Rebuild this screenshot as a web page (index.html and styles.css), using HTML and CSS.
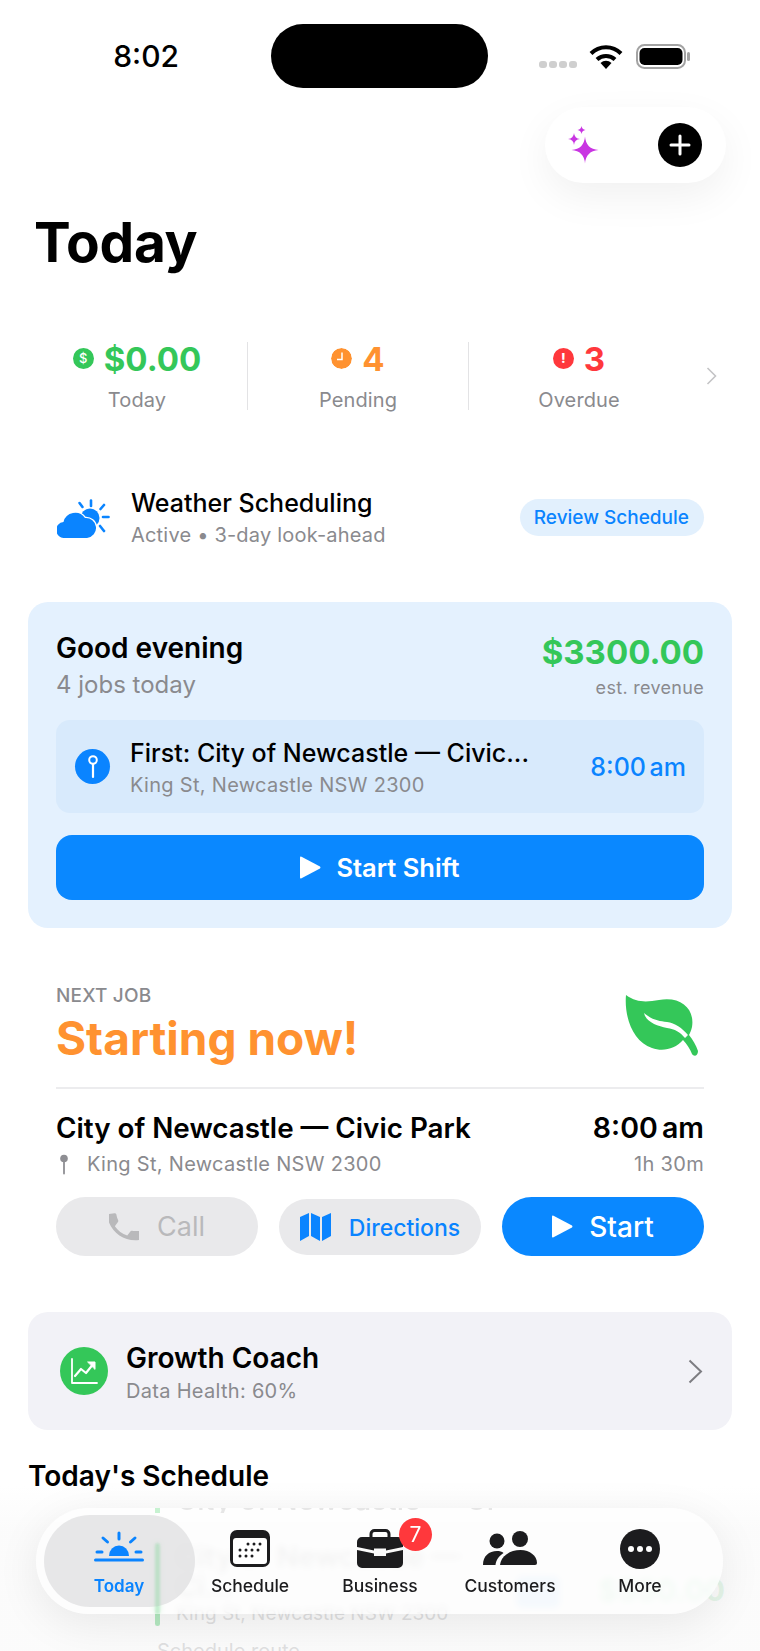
FILE: index.html
```html
<!DOCTYPE html>
<html lang="en">
<head>
    <meta charset="UTF-8">
    <meta name="viewport" content="width=device-width, initial-scale=1.0">
    <title>Today</title>
    <link rel="stylesheet" href="styles.css">
</head>
<body>
<div class="page">

    <!-- Status bar -->
    <div class="status">
        <span class="clock">8:02</span>
        <div class="island"></div>
        <div class="status-icons">
            <div class="signal"><i></i><i></i><i></i><i></i></div>
            <svg class="wifi" width="34" height="25" viewBox="0 0 34 25">
                <path d="M2 9.5A21 21 0 0 1 32 9.5" fill="none" stroke="#000" stroke-width="4"/>
                <path d="M8 15.5A13 13 0 0 1 26 15.5" fill="none" stroke="#000" stroke-width="4"/>
                <path d="M17 25L11.5 19A8 8 0 0 1 22.500 19Z" fill="#000"/>
            </svg>
            <svg width="55" height="25" viewBox="0 0 55 25">
                <rect x="1" y="1" width="48" height="23" rx="7.500" fill="none" stroke="#a3a3a3" stroke-width="2"/>
                <rect x="3.500" y="4" width="43" height="17" rx="5" fill="#000"/>
                <rect x="51" y="8" width="3" height="9" rx="1.500" fill="#a3a3a3"/>
            </svg>
        </div>
    </div>

    <!-- Assistant and add buttons -->
    <div class="toolbar">
        <svg width="32" height="38" viewBox="0 0 32 38">
            <path fill="#c935e2" d="M18 10.500Q19 23 31.500 24Q19 25 18 37.500Q17 25 4.500 24Q17 23 18 10.500Z"/>
            <path fill="#c935e2" d="M7 7Q7.500 12.500 13 13Q7.500 13.500 7 19Q6.500 13.500 1 13Q6.500 12.500 7 7Z"/>
            <path fill="#c935e2" d="M14.500 0Q15 3.500 18.500 4Q15 4.500 14.500 8Q14 4.500 10.500 4Q14 3.500 14.500 0Z"/>
        </svg>
        <div class="add-btn">
            <svg width="22" height="22" viewBox="0 0 22 22"><path d="M11 2V20M2 11H20" stroke="#fff" stroke-width="3" stroke-linecap="round"/></svg>
        </div>
    </div>

    <h1 class="title">Today</h1>

    <!-- Summary figures -->
    <div class="stats">
        <div class="stat">
            <div class="stat-value green"><span class="dot dot-green">$</span>$0.00</div>
            <div class="stat-label">Today</div>
        </div>
        <div class="stat stat-line">
            <div class="stat-value orange">
                <svg class="dot" viewBox="0 0 21 21"><circle cx="10.500" cy="10.500" r="10.500" fill="#ff9230"/><path d="M11 4.500V11.500H6" fill="none" stroke="#fff" stroke-width="1.500"/></svg>4
            </div>
            <div class="stat-label">Pending</div>
        </div>
        <div class="stat stat-line">
            <div class="stat-value red"><span class="dot dot-red">!</span>3</div>
            <div class="stat-label">Overdue</div>
        </div>
        <svg class="stat-more" width="11" height="18" viewBox="0 0 11 18"><path d="M1.500 1L9.500 9L1.500 17" fill="none" stroke="#c4c4c6" stroke-width="1.600"/></svg>
    </div>

    <!-- Weather -->
    <div class="weather">
        <svg width="54" height="39" viewBox="0 0 54 39">
            <g stroke="#0a84ff" stroke-width="2.600" stroke-linecap="round" fill="none">
                <path d="M34 1.500V7"/>
                <path d="M22.500 4L25.500 8"/>
                <path d="M47 6L43.500 10"/>
                <path d="M46 18H51.500"/>
                <path d="M43 27L47 32"/>
            </g>
            <circle cx="33" cy="19" r="9.500" fill="#0a84ff"/>
            <path d="M8 39A8 8 0 0 1 6.500 23A12 12 0 0 1 28 19A10 10 0 0 1 30 39Z" fill="#0a84ff" stroke="#fff" stroke-width="2.500" paint-order="stroke"/>
        </svg>
        <div class="weather-text">
            <div class="weather-name">Weather Scheduling</div>
            <div class="sub weather-sub">Active • 3-day look-ahead</div>
        </div>
        <div class="review">Review Schedule</div>
    </div>

    <!-- Shift card -->
    <div class="shift">
        <div class="shift-top">
            <div>
                <div class="greeting">Good evening</div>
                <div class="jobs-count">4 jobs today</div>
            </div>
            <div class="revenue">
                <div class="revenue-amount">$3300.00</div>
                <div class="revenue-label">est. revenue</div>
            </div>
        </div>
        <div class="first-job">
            <div class="pin-circle">
                <svg width="10" height="26" viewBox="0 0 10 26">
                    <circle cx="5" cy="6" r="3.800" fill="none" stroke="#fff" stroke-width="2"/>
                    <path d="M5 10V23" stroke="#fff" stroke-width="2.200" stroke-linecap="round"/>
                </svg>
            </div>
            <div class="first-job-text">
                <div class="first-job-name">First: City of Newcastle — Civic...</div>
                <div class="sub">King St, Newcastle NSW 2300</div>
            </div>
            <div class="first-job-time">8:00 am</div>
        </div>
        <div class="start-shift">
            <svg class="play" width="21" height="23" viewBox="0 0 21 23"><path d="M0 1.500Q0 0 1.500 .7L20 10.500Q21 11.500 20 12.500L1.500 22.300Q0 23 0 21.500Z" fill="#fff"/></svg>
            Start Shift
        </div>
    </div>

    <!-- Next job -->
    <div class="next">
        <div class="next-head">
            <div>
                <div class="next-label">NEXT JOB</div>
                <div class="next-status">Starting now!</div>
            </div>
            <svg width="73" height="62" viewBox="0 0 73 62">
                <path fill="#34c759" d="M1 0C12 8 22 7 34 5C56 1 70 14 67 32C66 36 65 38 64 40C68 45 71 50 73 56C73 61 69 62 67 59C65 54 62 49 58 45C50 54 38 57 27 53C8 47 -1 22 1 0Z"/>
                <path fill="#fff" d="M19 18C21 27 32 31 42 33C50 34 55 37 60 43L63 40C57 33 50 28 42 27C34 26 27 25 19 18Z"/>
            </svg>
        </div>
        <div class="next-row">
            <div class="next-name">City of Newcastle — Civic Park</div>
            <div class="next-time">8:00 am</div>
        </div>
        <div class="next-row next-row-sub">
            <div class="next-address">
                <svg width="10" height="21" viewBox="0 0 10 21">
                    <circle cx="5" cy="4.500" r="3.800" fill="#8e8e93"/>
                    <path d="M5 8V19.500" stroke="#8e8e93" stroke-width="1.800" stroke-linecap="round"/>
                </svg>
                <span class="sub">King St, Newcastle NSW 2300</span>
            </div>
            <div class="sub">1h 30m</div>
        </div>
        <div class="actions">
            <div class="action action-call">
                <svg width="30" height="30" viewBox="3 3 18 18"><path fill="#b9b9bb" d="M6.620 10.790c1.440 2.830 3.760 5.140 6.590 6.590l2.200-2.200c.27-.27.67-.36 1.020-.24 1.120.37 2.330.57 3.570.57.550 0 1 .45 1 1V20c0 .55-.45 1-1 1-9.390 0-17-7.610-17-17 0-.55.45-1 1-1h3.500c.55 0 1 .45 1 1 0 1.250.2 2.450.57 3.570.11.35.03.74-.25 1.020l-2.200 2.200z" transform="rotate(-8 12 12)"/></svg>
                Call
            </div>
            <div class="action action-map">
                <svg width="31" height="28" viewBox="0 0 31 28">
                    <path fill="#0a84ff" d="M0 4L9 0V23L0 28Z"/>
                    <path fill="#0a84ff" d="M11 0L20 4V28L11 23Z"/>
                    <path fill="#0a84ff" d="M22 4L31 0V23L22 28Z"/>
                </svg>
                <span class="action-map-text">Directions</span>
            </div>
            <div class="action action-start">
                <svg width="21" height="23" viewBox="0 0 21 23"><path d="M0 1.500Q0 0 1.500 .7L20 10.500Q21 11.500 20 12.500L1.500 22.300Q0 23 0 21.500Z" fill="#fff"/></svg>
                Start
            </div>
        </div>
    </div>

    <!-- Growth coach -->
    <div class="coach">
        <div class="coach-icon">
            <svg width="28" height="28" viewBox="0 0 28 28" fill="none" stroke="#fff" stroke-linecap="round" stroke-linejoin="round">
                <path d="M2 2V26H27" stroke-width="1.800"/>
                <path d="M5 19L11 12L16 16L24 6" stroke-width="2.200"/>
                <path d="M18 5H25V12Z" fill="#fff" stroke-width="1"/>
            </svg>
        </div>
        <div class="coach-text">
            <div class="coach-name">Growth Coach</div>
            <div class="sub">Data Health: 60%</div>
        </div>
        <svg width="15" height="25" viewBox="0 0 15 25"><path d="M1.500 1.500L13 12.500L1.500 23.500" fill="none" stroke="#7d7d82" stroke-width="2"/></svg>
    </div>

    <h2 class="schedule-title">Today's Schedule</h2>

    <!-- Schedule list, runs on under the tab bar -->
    <div class="job">
        <div class="job-bar"></div>
        <div class="job-text">
            <div class="job-name">City of Newcastle — Ci...</div>
            <div class="job-address">King St, Newcastle NSW 2300</div>
        </div>
        <div class="job-chip"></div>
        <div class="job-amount">$550.00</div>
    </div>
    <div class="job-route">Schedule route</div>

    <div class="fade"></div>

    <!-- Tab bar -->
    <div class="tabs">
        <!-- Bit of the list refracted along the top edge of the glass -->
        <div class="tabs-edge">
            <div class="tabs-edge-bar"></div>
            <div class="tabs-edge-text">City of Newcastle — Ci</div>
        </div>
        <div class="tab tab-active">
            <svg width="50" height="40" viewBox="0 0 50 40" fill="none" stroke="#0a84ff" stroke-width="3" stroke-linecap="round">
                <path d="M25 4V10"/>
                <path d="M9 9L13.500 13"/>
                <path d="M41 9L36.500 13"/>
                <path d="M3 23H8"/>
                <path d="M42 23H47"/>
                <path d="M1.500 31H48.500"/>
                <path d="M15 27A10 10.500 0 0 1 35 27Z" fill="#0a84ff" stroke="none"/>
            </svg>
            <span class="tab-label">Today</span>
        </div>
        <div class="tab">
            <svg width="40" height="40" viewBox="0 0 40 40">
                <rect y="1" width="40" height="37" rx="7" fill="#1c1c1e"/>
                <rect x="3" y="9" width="34" height="26" rx="3" fill="#fff"/>
                <g fill="#1c1c1e">
                    <circle cx="18" cy="15" r="1.500"/><circle cx="24" cy="15" r="1.500"/><circle cx="30" cy="15" r="1.500"/>
                    <circle cx="10" cy="21" r="1.500"/><circle cx="16" cy="21" r="1.500"/><circle cx="22" cy="21" r="1.500"/><circle cx="28" cy="21" r="1.500"/>
                    <circle cx="10" cy="27" r="1.500"/><circle cx="16" cy="27" r="1.500"/><circle cx="22" cy="27" r="1.500"/>
                </g>
            </svg>
            <span class="tab-label">Schedule</span>
        </div>
        <div class="tab">
            <div class="badge">7</div>
            <svg width="46" height="40" viewBox="0 0 46 40" fill="#1c1c1e">
                <rect x="14" y="1.500" width="18" height="10" rx="3.500" fill="none" stroke="#1c1c1e" stroke-width="3"/>
                <path d="M5 8H41A5 5 0 0 1 46 13V18L29 21.500V19.500H17V21.500L0 18V13A5 5 0 0 1 5 8Z"/>
                <path d="M0 21L17 24.500V27H29V24.500L46 21V34A5 5 0 0 1 41 39H5A5 5 0 0 1 0 34Z"/>
            </svg>
            <span class="tab-label">Business</span>
        </div>
        <div class="tab">
            <svg width="54" height="40" viewBox="0 0 54 40" fill="#1c1c1e">
                <circle cx="14" cy="12" r="7.500"/>
                <circle cx="37" cy="10" r="8"/>
                <path d="M0 36C0 27 6 22 14 22C16.500 22 19 22.500 20.500 24C16 27 13 31 12.500 36Z"/>
                <path d="M17 36C18 27 27 21 37.500 21C47 21 54 27 54 34Q54 36 52 36Z"/>
            </svg>
            <span class="tab-label">Customers</span>
        </div>
        <div class="tab">
            <svg width="40" height="40" viewBox="0 0 40 40">
                <circle cx="20" cy="20" r="20" fill="#1c1c1e"/>
                <circle cx="11" cy="20" r="3" fill="#fff"/><circle cx="20" cy="20" r="3" fill="#fff"/><circle cx="29" cy="20" r="3" fill="#fff"/>
            </svg>
            <span class="tab-label">More</span>
        </div>
    </div>

</div>
</body>
</html>
```

FILE: styles.css
```css
body {
    margin: 0;
    font-family: Inter, "Liberation Sans", sans-serif;
    background-color: #fff;
    color: #000;
}

.page {
    position: relative;
    width: 760px;
    height: 1651px;
    overflow: hidden;
    background: #fff;
}

.sub {
    font-size: 20px;
    line-height: 24px;
    letter-spacing: 0.3px;
    color: #8a8a8e;
}

.green { color: #34c759; }
.orange { color: #ff9230; }
.red { color: #ff383c; }

/* Status bar */
.status {
    display: flex;
    align-items: center;
    height: 64px;
    padding-top: 24px;
}

.clock {
    width: 271px;
    padding-right: 92px;
    box-sizing: border-box;
    text-align: right;
    font-size: 30px;
    font-weight: 500;
}

.island {
    width: 217px;
    height: 64px;
    background: #000;
    border-radius: 32px;
}

.status-icons {
    display: flex;
    align-items: center;
    margin-left: 51px;
}

.signal {
    display: flex;
    gap: 2px;
    margin-top: 16px;
    margin-right: 12px;
}

.signal i {
    width: 8px;
    height: 7px;
    border-radius: 3px;
    background: #cfcfcf;
}

.wifi {
    margin-right: 13px;
}

/* Floating buttons */
.toolbar {
    display: flex;
    align-items: center;
    justify-content: space-between;
    box-sizing: border-box;
    width: 181px;
    height: 76px;
    margin: 19px 34px 0 auto;
    padding: 0 24px 0 22px;
    border-radius: 38px;
    background: #fff;
    box-shadow: 0 14px 40px rgba(0, 0, 0, 0.06);
}

.add-btn {
    display: flex;
    align-items: center;
    justify-content: center;
    width: 44px;
    height: 44px;
    border-radius: 50%;
    background: #000;
}

.title {
    margin: 26px 0 0 34px;
    font-size: 55px;
    line-height: 66px;
    font-weight: 700;
    letter-spacing: -0.3px;
}

/* Summary figures */
.stats {
    display: flex;
    align-items: flex-start;
    height: 68px;
    margin-top: 67px;
    padding-left: 27px;
}

.stat {
    width: 220px;
    height: 68px;
    text-align: center;
}

.stat-line {
    border-left: 1px solid #e3e3e5;
}

.stat-value {
    display: flex;
    align-items: center;
    justify-content: center;
    gap: 10px;
    height: 33px;
    font-size: 33px;
    font-weight: 700;
}

.stat-label {
    margin-top: 13px;
    font-size: 20px;
    line-height: 24px;
    letter-spacing: 0.1px;
    color: #8a8a8e;
}

.dot {
    width: 21px;
    height: 21px;
    border-radius: 50%;
    color: #fff;
    font-size: 13px;
    line-height: 21px;
    font-weight: 500;
}

.dot-green { background: #34c759; }
.dot-red { background: #ff383c; font-weight: 800; }

.stat-more {
    margin: 25px 0 0 17px;
}

/* Weather */
.weather {
    display: flex;
    align-items: center;
    height: 56px;
    margin-top: 80px;
    padding: 0 56px 0 57px;
}

.weather-text {
    flex: 1;
    margin-left: 20px;
}

.weather-name {
    font-size: 25px;
    line-height: 26px;
    font-weight: 500;
    margin-bottom: 7px;
}

.weather-sub {
    letter-spacing: 0.2px;
}

.review {
    padding: 0 15px 0 14px;
    height: 37px;
    line-height: 37px;
    margin-top: -2px;
    border-radius: 19px;
    background: #e2f0fd;
    color: #0a84ff;
    font-size: 19px;
    font-weight: 500;
}

/* Shift card */
.shift {
    margin: 56px 28px 0;
    padding: 29px 28px 28px;
    border-radius: 20px;
    background: #e4f1fe;
}

.shift-top {
    display: flex;
    justify-content: space-between;
}

.greeting {
    font-size: 28px;
    line-height: 34px;
    font-weight: 600;
}

.jobs-count {
    margin-top: 5px;
    font-size: 24px;
    line-height: 30px;
    color: #8a8a8e;
}

.revenue {
    text-align: right;
}

.revenue-amount {
    margin-top: 2px;
    font-size: 33px;
    line-height: 38px;
    font-weight: 700;
    color: #34c759;
}

.revenue-label {
    margin-top: 6px;
    font-size: 18px;
    line-height: 22px;
    letter-spacing: 0.3px;
    color: #8a8a8e;
}

.first-job {
    display: flex;
    align-items: center;
    height: 93px;
    margin-top: 20px;
    padding: 0 18px 0 19px;
    border-radius: 14px;
    background: #d8eafc;
}

.pin-circle {
    display: flex;
    align-items: center;
    justify-content: center;
    flex: none;
    width: 35px;
    height: 35px;
    border-radius: 50%;
    background: #0a84ff;
}

.first-job-text {
    flex: 1;
    margin-left: 20px;
    padding-top: 2px;
}

.first-job-name {
    font-size: 25px;
    line-height: 30px;
    font-weight: 500;
    margin-bottom: 5px;
}

.first-job-time {
    font-size: 25px;
    font-weight: 500;
    color: #0a84ff;
    word-spacing: -3px;
}

.start-shift {
    display: flex;
    align-items: center;
    justify-content: center;
    gap: 15px;
    height: 65px;
    margin-top: 22px;
    border-radius: 16px;
    background: #0a88ff;
    color: #fff;
    font-size: 25.5px;
    font-weight: 600;
}

/* Next job */
.next {
    margin: 56px 56px 0;
}

.next-head {
    display: flex;
    align-items: flex-start;
    justify-content: space-between;
    padding-bottom: 22px;
    border-bottom: 2px solid #ececee;
}

.next-head svg {
    margin-top: 11px;
    margin-right: 6px;
}

.next-label {
    font-size: 19px;
    line-height: 24px;
    font-weight: 500;
    letter-spacing: 0.2px;
    color: #8a8a8e;
}

.next-status {
    margin-top: 3px;
    font-size: 46px;
    line-height: 54px;
    font-weight: 700;
    color: #ff9230;
}

.next-row {
    display: flex;
    align-items: center;
    justify-content: space-between;
    margin-top: 21px;
}

.next-row-sub {
    margin-top: 6px;
}

.next-name {
    font-size: 27.8px;
    line-height: 36px;
    font-weight: 600;
}

.next-time {
    font-size: 28.5px;
    line-height: 36px;
    font-weight: 600;
    word-spacing: -3px;
}

.next-address {
    display: flex;
    align-items: center;
    gap: 18px;
    padding-left: 3px;
}

.actions {
    display: grid;
    grid-template-columns: repeat(3, 1fr);
    gap: 21px;
    align-items: center;
    margin-top: 21px;
}

.action {
    display: flex;
    align-items: center;
    justify-content: center;
    height: 59px;
    border-radius: 30px;
}

.action-call {
    gap: 18px;
    background: #e9e9eb;
    color: #b9b9bb;
    font-size: 27px;
}

.action-map {
    gap: 18px;
    height: 56px;
    background: #e9e9eb;
    color: #0a84ff;
    font-size: 23px;
    font-weight: 500;
}

.action-map-text {
    padding-top: 3px;
}

.action-start {
    gap: 16px;
    background: #0a88ff;
    color: #fff;
    font-size: 28px;
    font-weight: 500;
}

/* Growth coach */
.coach {
    display: flex;
    align-items: center;
    height: 118px;
    margin: 56px 28px 0;
    padding: 0 29px 0 32px;
    border-radius: 20px;
    background: #f2f2f7;
}

.coach-icon {
    display: flex;
    align-items: center;
    justify-content: center;
    width: 48px;
    height: 48px;
    border-radius: 50%;
    background: #34c759;
}

.coach-text {
    flex: 1;
    margin-left: 18px;
}

.coach-name {
    font-size: 28px;
    line-height: 36px;
    font-weight: 600;
    margin-bottom: 3px;
}

.schedule-title {
    margin: 28px 0 0 28px;
    font-size: 28px;
    line-height: 36px;
    font-weight: 600;
}

/* Schedule list */
.job {
    display: flex;
    height: 84px;
    margin-top: 48px;
    padding-left: 155px;
}

.job-bar {
    position: relative;
    z-index: 1;
    width: 5px;
    border-radius: 3px;
    background: #34c759;
    opacity: 0.36;
}

.job-text {
    display: flex;
    flex-direction: column;
    justify-content: space-between;
    width: 340px;
    margin-left: 16px;
}

.job-name {
    font-size: 29px;
    line-height: 30px;
    font-weight: 600;
    color: #a3a3a3;
}

.job-address {
    font-size: 19px;
    line-height: 24px;
    color: #8a8a8e;
}

.job-chip {
    width: 44px;
    height: 32px;
    margin-top: 34px;
    background: #0a84ff;
    opacity: 0.32;
    border-radius: 6px;
}

.job-amount {
    margin: 30px 0 0 38px;
    font-size: 30px;
    font-weight: 700;
    color: #34c759;
    opacity: 0.45;
}

.job-route {
    margin: 13px 0 0 157px;
    font-size: 20px;
    line-height: 24px;
    color: #8a8a8e;
}

/* Whitens the content that runs under the tab bar */
.fade {
    position: absolute;
    left: 0;
    right: 0;
    bottom: 0;
    height: 165px;
    background: linear-gradient(rgba(250, 250, 250, 0), rgba(250, 250, 250, 0.76) 25%);
}

/* Tab bar */
.tabs {
    position: absolute;
    z-index: 2;
    left: 36px;
    top: 1508px;
    display: flex;
    box-sizing: border-box;
    width: 687px;
    height: 106px;
    padding: 21px 18px 0 19px;
    border-radius: 53px;
    background: rgba(255, 255, 255, 0.55);
    backdrop-filter: blur(3px);
    box-shadow: 0 10px 44px rgba(0, 0, 0, 0.08);
}

.tabs-edge {
    position: absolute;
    left: 119px;
    top: 0;
    display: flex;
    height: 5px;
    overflow: hidden;
}

.tabs-edge-bar {
    width: 5px;
    height: 7px;
    border-radius: 0 0 3px 3px;
    background: #c7f2d1;
}

.tabs-edge-text {
    margin: -23px 0 0 16px;
    font-size: 29px;
    line-height: 30px;
    font-weight: 500;
    white-space: nowrap;
    color: #e6e6e6;
}

.tab {
    position: relative;
    display: flex;
    flex-direction: column;
    align-items: center;
    width: 130px;
    color: #1c1c1e;
}

.tab svg {
    position: relative;
}

.tab-label {
    position: relative;
    margin-top: 5px;
    font-size: 17.5px;
    line-height: 24px;
    font-weight: 500;
}

.tab-active {
    margin: 0 1px 0 -1px;
    color: #0a84ff;
}

.tab-active .tab-label {
    font-size: 17px;
    font-weight: 600;
}

/* Rounded highlight behind the selected tab */
.tab-active::before {
    content: "";
    position: absolute;
    left: -10px;
    right: -11px;
    top: -14px;
    height: 92px;
    border-radius: 46px;
    background: rgba(222, 222, 223, 0.72);
}

/* Green job bar showing through the glass */
.tab-active::after {
    content: "";
    position: absolute;
    left: 101px;
    top: 14px;
    width: 5px;
    height: 71px;
    border-radius: 3px;
    background: rgba(52, 199, 89, 0.2);
    filter: blur(1px);
}

.badge {
    position: absolute;
    left: 84px;
    top: -11px;
    z-index: 1;
    width: 33px;
    height: 33px;
    border-radius: 50%;
    background: #ff383c;
    color: #fff;
    font-size: 21px;
    line-height: 33px;
    text-align: center;
}
```
